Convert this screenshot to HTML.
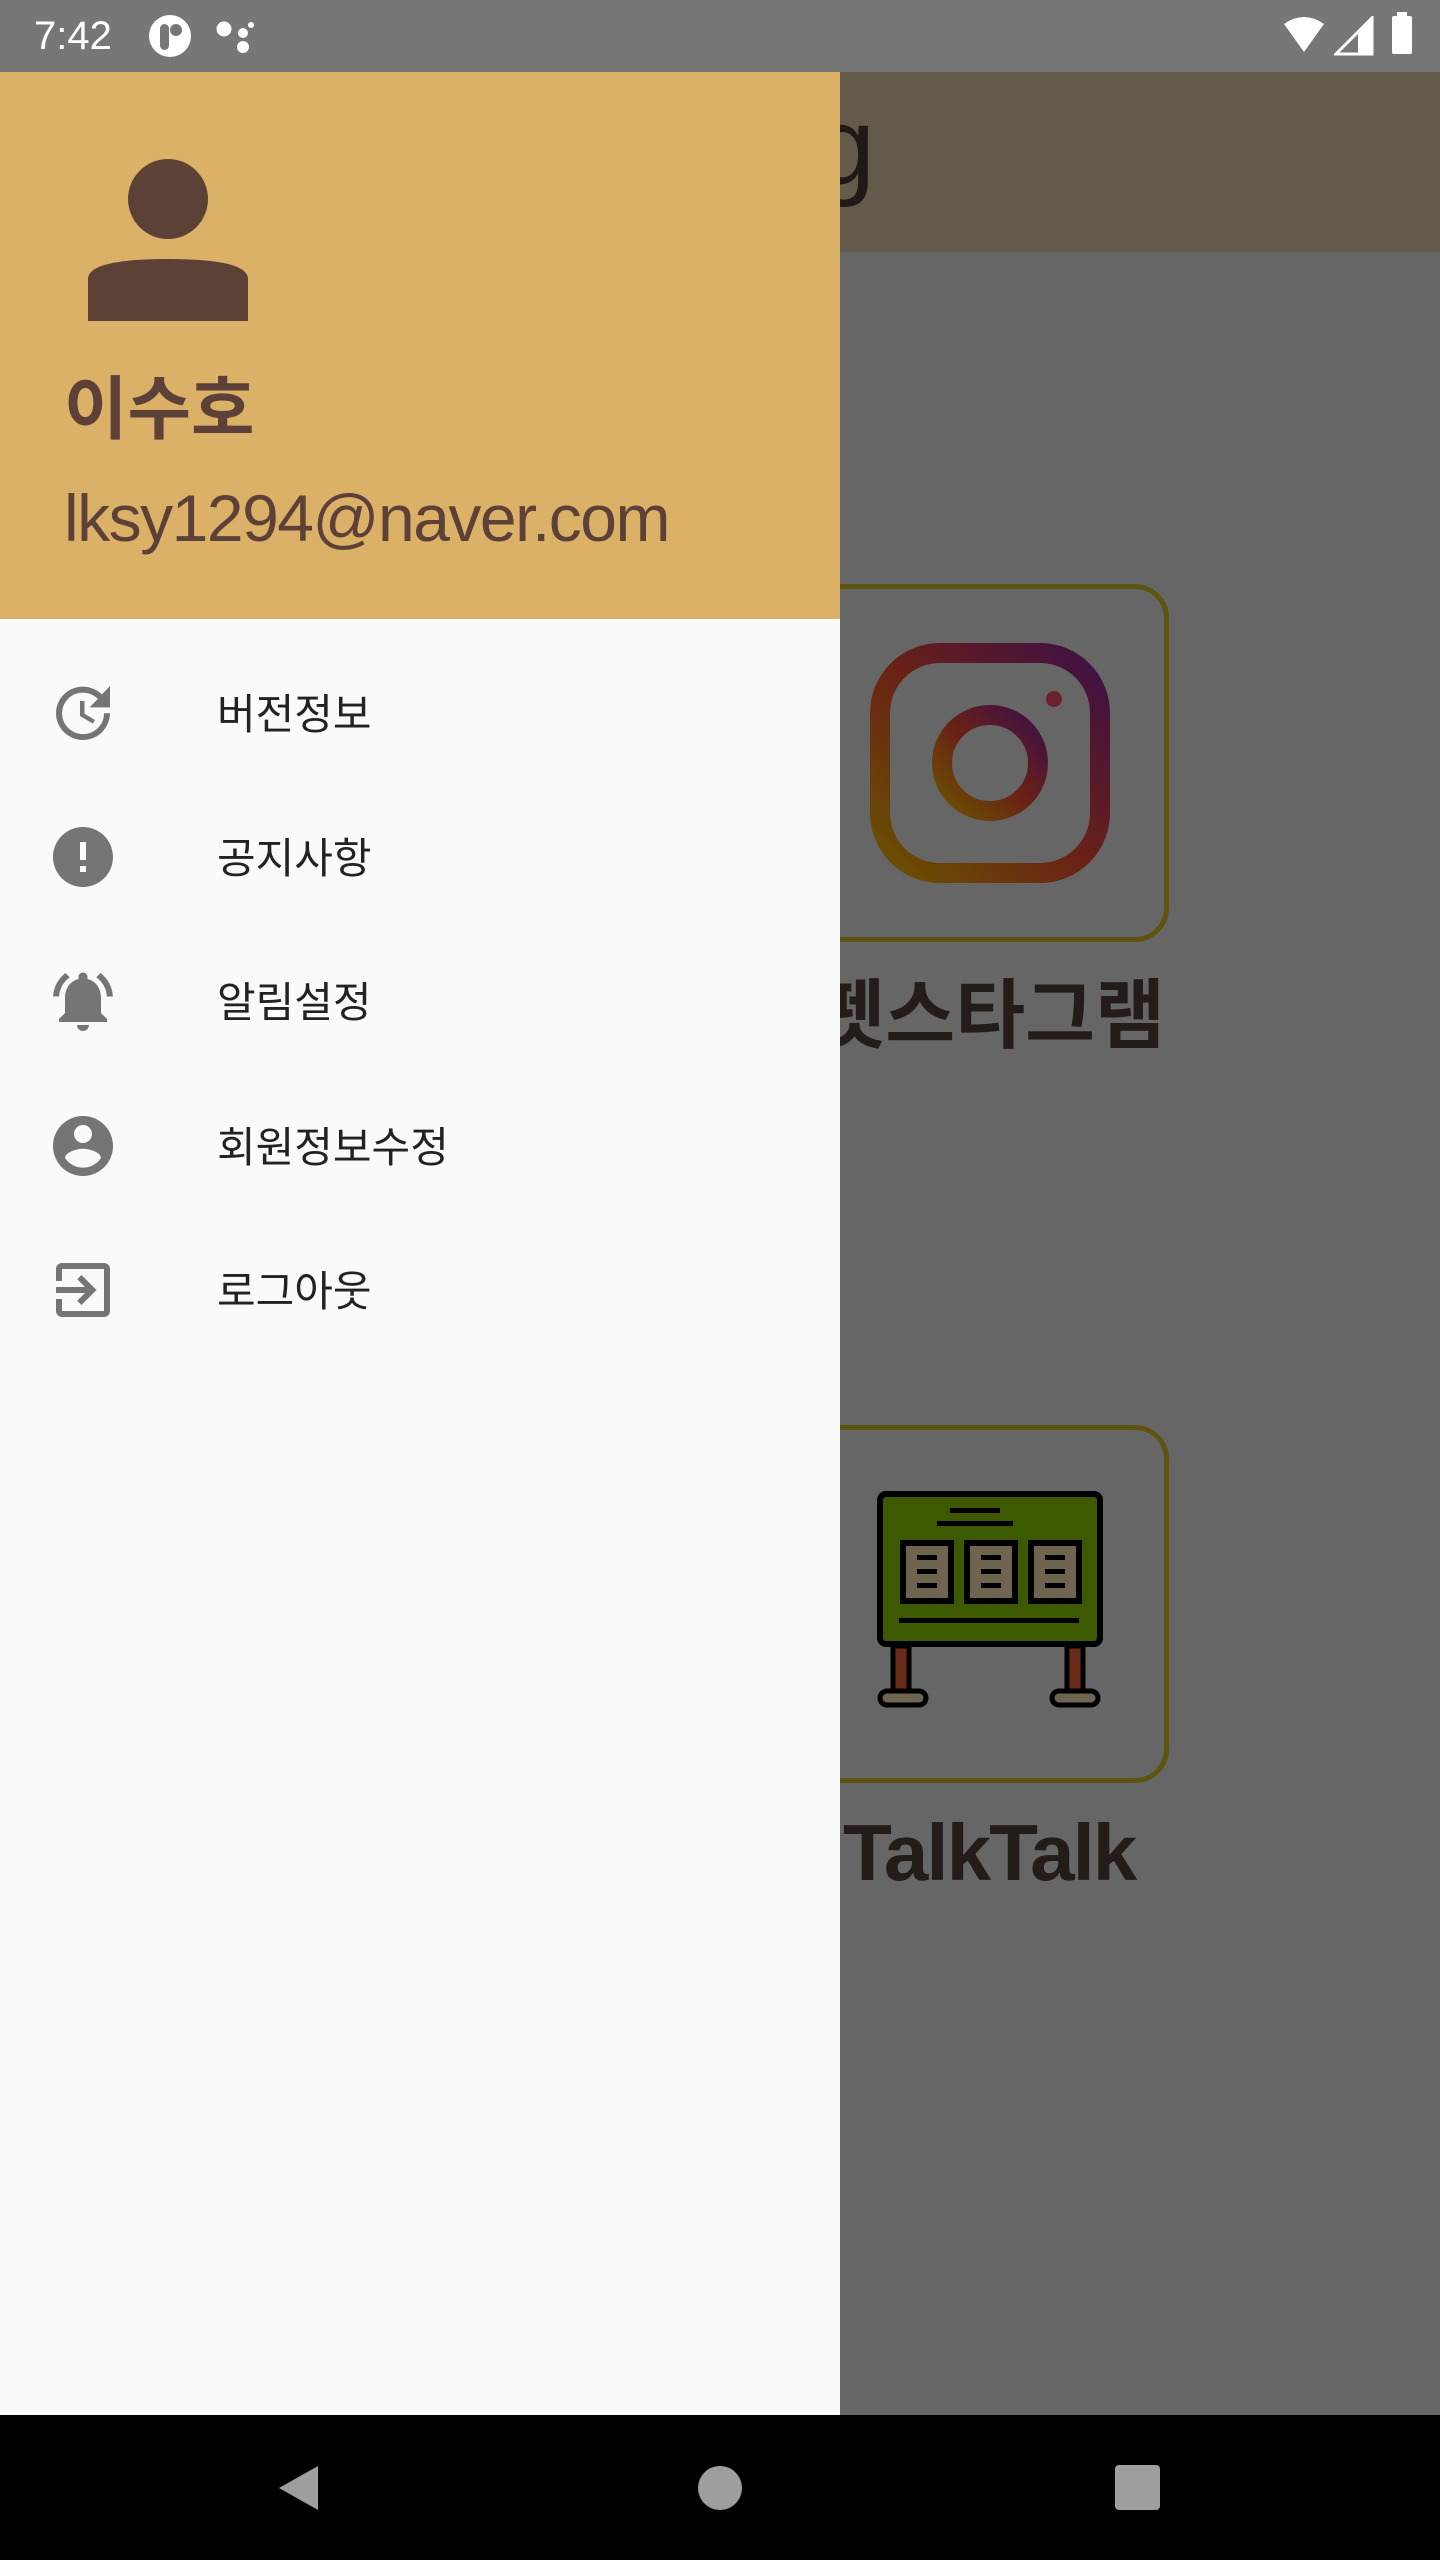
<!DOCTYPE html>
<html><head><meta charset="utf-8">
<style>
*{margin:0;padding:0;box-sizing:border-box}
body{width:1440px;height:2560px;position:relative;overflow:hidden;background:#666;font-family:"Liberation Sans","Noto Sans CJK KR",sans-serif}
.abs{position:absolute}
</style></head><body>
<div class="abs" style="left:0;top:72px;width:1440px;height:180px;background:#625a4a"></div>
<div class="abs" style="left:814px;top:92px;font-size:110px;color:#1f1a16;line-height:1">g</div>
<div class="abs" style="left:740px;top:584px;width:429px;height:358px;border:5px solid #5e5410;border-radius:34px"></div>
<svg class="abs" style="left:870px;top:643px" width="240" height="240" viewBox="0 0 240 240">
<defs><linearGradient id="ig" x1="0" y1="1" x2="1" y2="0"><stop offset="0" stop-color="#6a5200"/><stop offset="0.5" stop-color="#6a2016"/><stop offset="1" stop-color="#3e1046"/></linearGradient></defs>
<rect x="10" y="10" width="220" height="220" rx="60" fill="none" stroke="url(#ig)" stroke-width="20"/>
<circle cx="120" cy="120" r="48" fill="none" stroke="url(#ig)" stroke-width="20"/>
<circle cx="184" cy="56" r="8" fill="#6a2030"/>
</svg>
<div class="abs" style="left:790px;top:972px;width:375px;text-align:right;font-size:76px;font-weight:bold;color:#231c18;line-height:90px">펫스타그램</div>
<div class="abs" style="left:740px;top:1425px;width:429px;height:358px;border:5px solid #5e5410;border-radius:34px"></div>
<svg class="abs" style="left:877px;top:1491px" width="226" height="226" viewBox="0 0 226 226">
<rect x="3" y="3" width="220" height="150" rx="6" fill="#3e5a00" stroke="#000" stroke-width="6"/>
<rect x="73" y="17" width="50" height="5" fill="#000"/><rect x="60" y="30" width="76" height="5" fill="#000"/>
<g fill="#6e6450" stroke="#000" stroke-width="6"><rect x="26" y="52" width="48" height="58"/><rect x="90" y="52" width="48" height="58"/><rect x="154" y="52" width="48" height="58"/></g>
<g fill="#000"><rect x="40" y="64" width="20" height="5"/><rect x="40" y="78" width="20" height="5"/><rect x="40" y="92" width="20" height="5"/><rect x="104" y="64" width="20" height="5"/><rect x="104" y="78" width="20" height="5"/><rect x="104" y="92" width="20" height="5"/><rect x="168" y="64" width="20" height="5"/><rect x="168" y="78" width="20" height="5"/><rect x="168" y="92" width="20" height="5"/>
<rect x="22" y="127" width="180" height="5"/></g>
<rect x="16" y="155" width="16" height="45" fill="#6a2a1a" stroke="#000" stroke-width="5"/>
<rect x="190" y="155" width="16" height="45" fill="#6a2a1a" stroke="#000" stroke-width="5"/>
<rect x="3" y="200" width="46" height="14" rx="7" fill="#6e6450" stroke="#000" stroke-width="5"/>
<rect x="175" y="200" width="46" height="14" rx="7" fill="#6e6450" stroke="#000" stroke-width="5"/>
</svg>
<div class="abs" style="left:843px;top:1808px;font-size:80px;font-weight:bold;color:#231c18;line-height:90px;letter-spacing:-2px">TalkTalk</div>

<div class="abs" style="left:0;top:0;width:1440px;height:72px;background:#777"></div>
<div class="abs" style="left:34px;top:14px;font-size:40px;color:#fff;line-height:44px">7:42</div>
<svg class="abs" style="left:148px;top:14px" width="44" height="44" viewBox="0 0 44 44"><circle cx="22" cy="22" r="21" fill="#fff"/><rect x="12" y="10" width="9" height="26" rx="4.5" fill="#777"/><circle cx="28" cy="16" r="6" fill="#777"/></svg>
<svg class="abs" style="left:214px;top:20px" width="44" height="36" viewBox="0 0 44 36"><circle cx="10" cy="9" r="7.5" fill="#fff"/><circle cx="29" cy="13" r="5" fill="#fff"/><circle cx="37" cy="5" r="3" fill="#fff"/><circle cx="29" cy="27" r="6" fill="#fff"/></svg>
<svg class="abs" style="left:1282px;top:16px" width="44" height="40" viewBox="0 0 44 40"><path d="M2 8 Q22 -6 42 8 L22 36Z" fill="#fff"/></svg>
<svg class="abs" style="left:1334px;top:16px" width="40" height="40" viewBox="0 0 40 40"><path d="M38 2 V38 H2Z" fill="none" stroke="#fff" stroke-width="3"/><path d="M38 2 V38 H24 V18Z" fill="#fff"/></svg>
<div class="abs" style="left:1392px;top:16px;width:20px;height:38px;background:#fff;border-radius:2px"></div>
<div class="abs" style="left:1397px;top:12px;width:10px;height:5px;background:#fff"></div>

<div class="abs" style="left:0;top:72px;width:840px;height:547px;background:#dbb167"></div>
<svg class="abs" style="left:88px;top:159px" width="160" height="162" viewBox="0 0 160 162"><ellipse cx="80" cy="40" rx="40" ry="40" fill="#5c4236"/><path d="M0 162 V120 Q0 100 80 100 Q160 100 160 120 V162Z" fill="#5c4236"/></svg>
<div class="abs" style="left:64px;top:368px;font-size:69px;font-weight:bold;color:#5d4037;line-height:84px">이수호</div>
<div class="abs" style="left:64px;top:478px;font-size:66px;color:#5d4037;line-height:80px;letter-spacing:-1.5px">lksy1294@naver.com</div>
<div class="abs" style="left:0;top:619px;width:840px;height:1796px;background:#fafafa"></div>

<svg class="abs" style="left:47px;top:677px" width="72" height="72" viewBox="0 0 24 24"><path fill="#757575" d="M21 10.12h-6.78l2.74-2.82c-2.73-2.7-7.150-2.8-9.88-.1-2.73 2.71-2.73 7.08 0 9.79s7.15 2.71 9.88 0C18.32 15.65 19 14.08 19 12.1h2c0 1.98-.88 4.55-2.64 6.29-3.51 3.48-9.21 3.48-12.72 0-3.5-3.47-3.53-9.11-.02-12.58s9.14-3.47 12.65 0L21 3v7.12zM12.5 8v4.25l3.5 2.08-.72 1.21L11 13V8h1.5z"/></svg>
<svg class="abs" style="left:47px;top:821px" width="72" height="72" viewBox="0 0 24 24"><path fill="#757575" d="M12 2C6.48 2 2 6.48 2 12s4.48 10 10 10 10-4.48 10-10S17.52 2 12 2zm1 15h-2v-2h2v2zm0-4h-2V7h2v6z"/></svg>
<svg class="abs" style="left:47px;top:965px" width="72" height="72" viewBox="0 0 24 24"><path fill="#757575" d="M7.58 4.08L6.15 2.65C3.75 4.48 2.17 7.3 2.03 10.5h2c.15-2.65 1.51-4.97 3.55-6.42zm12.39 6.42h2c-.15-3.2-1.73-6.02-4.12-7.85l-1.42 1.43c2.02 1.45 3.39 3.77 3.54 6.42zM18 11c0-3.07-1.64-5.64-4.5-6.32V4c0-.83-.67-1.5-1.5-1.5s-1.5.67-1.5 1.5v.68C7.63 5.36 6 7.92 6 11v5l-2 2v1h16v-1l-2-2v-5zm-6 11c.14 0 .27-.01.4-.04.65-.14 1.18-.58 1.44-1.18.1-.24.15-.5.15-.78h-4c.01 1.1.9 2 2.01 2z"/></svg>
<svg class="abs" style="left:47px;top:1110px" width="72" height="72" viewBox="0 0 24 24"><path fill="#757575" d="M12 2C6.48 2 2 6.48 2 12s4.48 10 10 10 10-4.48 10-10S17.52 2 12 2zm0 3c1.66 0 3 1.34 3 3s-1.34 3-3 3-3-1.34-3-3 1.34-3 3-3zm0 14.2c-2.5 0-4.71-1.28-6-3.22.03-1.99 4-3.08 6-3.08 1.99 0 5.97 1.09 6 3.08-1.29 1.94-3.5 3.22-6 3.22z"/></svg>
<svg class="abs" style="left:47px;top:1254px" width="72" height="72" viewBox="0 0 24 24"><path fill="#757575" d="M10.09 15.59L11.5 17l5-5-5-5-1.41 1.41L12.67 11H3v2h9.67l-2.58 2.59zM19 3H5c-1.11 0-2 .9-2 2v4h2V5h14v14H5v-4H3v4c0 1.1.89 2 2 2h14c1.1 0 2-.9 2-2V5c0-1.1-.9-2-2-2z"/></svg>

<div class="abs" style="left:217px;top:688px;font-size:42px;color:#222;line-height:54px">버전정보</div>
<div class="abs" style="left:217px;top:832px;font-size:42px;color:#222;line-height:54px">공지사항</div>
<div class="abs" style="left:217px;top:976px;font-size:42px;color:#222;line-height:54px">알림설정</div>
<div class="abs" style="left:217px;top:1121px;font-size:42px;color:#222;line-height:54px">회원정보수정</div>
<div class="abs" style="left:217px;top:1265px;font-size:42px;color:#222;line-height:54px">로그아웃</div>

<div class="abs" style="left:0;top:2415px;width:1440px;height:145px;background:#000"></div>
<svg class="abs" style="left:276px;top:2464px" width="44" height="48" viewBox="0 0 44 48"><path d="M42 2 V46 L3 24Z" fill="#9e9e9e"/></svg>
<div class="abs" style="left:698px;top:2466px;width:44px;height:44px;border-radius:50%;background:#9e9e9e"></div>
<div class="abs" style="left:1115px;top:2465px;width:45px;height:45px;border-radius:4px;background:#9e9e9e"></div>
</body></html>
